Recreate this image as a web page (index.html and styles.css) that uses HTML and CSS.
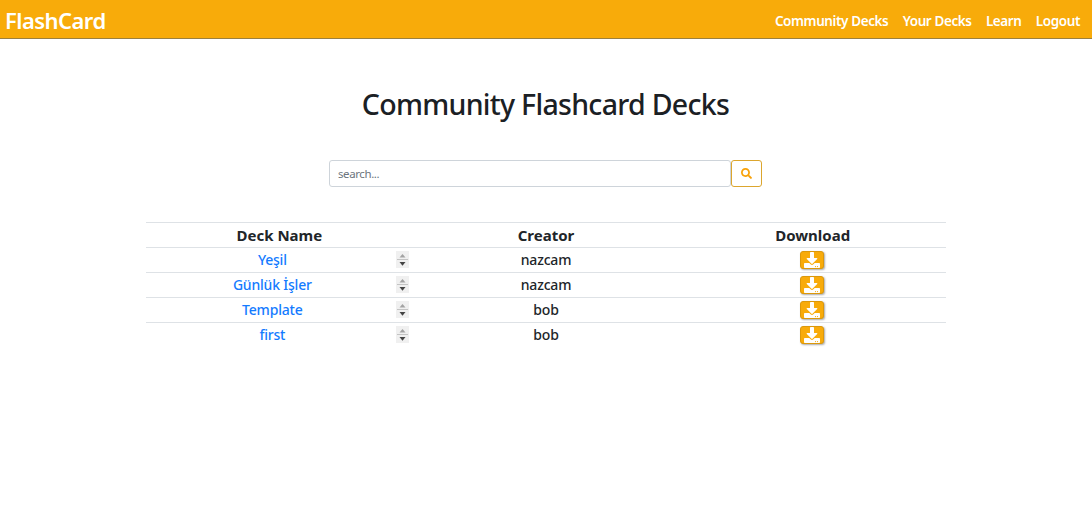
FILE: index.html
```html
<!DOCTYPE html>
<html lang="en">
<head>
<meta charset="utf-8">
<title>FlashCard</title>
<link rel="stylesheet" href="styles.css">
</head>
<body>
<svg class="defs" aria-hidden="true">
  <symbol id="search" viewBox="0 0 512 512"><path d="M505 442.700L405.300 343c-4.500-4.500-10.600-7-17-7H372c27.600-35.300 44-79.700 44-128C416 93.100 322.900 0 208 0S0 93.100 0 208s93.100 208 208 208c48.300 0 92.700-16.400 128-44v16.300c0 6.400 2.500 12.500 7 17l99.700 99.700c9.400 9.400 24.600 9.400 33.900 0l28.300-28.300c9.400-9.400 9.400-24.600.1-34zM208 336c-70.700 0-128-57.200-128-128 0-70.700 57.200-128 128-128 70.700 0 128 57.200 128 128 0 70.700-57.200 128-128 128z"/></symbol>
  <symbol id="download" viewBox="0 0 512 512"><path d="M216 0h80c13.300 0 24 10.700 24 24v168h87.700c17.800 0 26.700 21.500 14.100 34.100L269.700 378.300c-7.500 7.500-19.800 7.500-27.300 0L90.100 226.100c-12.600-12.600-3.700-34.100 14.100-34.100H192V24c0-13.300 10.700-24 24-24zm296 376v112c0 13.300-10.700 24-24 24H24c-13.300 0-24-10.700-24-24V376c0-13.300 10.700-24 24-24h146.700l49 49c20.100 20.100 52.500 20.100 72.600 0l49-49H488c13.300 0 24 10.700 24 24zm-124 88c0-11-9-20-20-20s-20 9-20 20 9 20 20 20 20-9 20-20zm64 0c0-11-9-20-20-20s-20 9-20 20 9 20 20 20 20-9 20-20z"/></symbol>
  <symbol id="spinner" viewBox="0 0 13 17"><path fill="#f0f0f0" d="M0 0h13v17H0z"/><path fill="#a3a3a3" d="M3.500 6.500l3-3.500 3 3.500z"/><path fill="#c4c4c4" d="M1 8h11v1H1z"/><path fill="#444" d="M3.500 11h6l-3 3.800z"/></symbol>
</svg>
<header class="navbar">
  <a class="brand">FlashCard</a>
  <nav class="links">
    <a>Community Decks</a>
    <a>Your Decks</a>
    <a>Learn</a>
    <a>Logout</a>
  </nav>
</header>
<main class="page">
  <h1 class="title">Community Flashcard Decks</h1>
  <form class="search">
    <input class="search-input" type="text" placeholder="search...">
    <button class="search-button" type="button" aria-label="Search"><svg class="search-icon"><use href="#search"/></svg></button>
  </form>
  <div class="decks">
    <div class="row head"><div>Deck Name</div><div>Creator</div><div>Download</div></div>
    <div class="row"><div class="deck"><a class="name">Yeşil</a><svg class="spinner"><use href="#spinner"/></svg></div><div>nazcam</div><div class="action"><button class="download" aria-label="Download"><svg class="download-icon"><use href="#download"/></svg></button></div></div>
    <div class="row"><div class="deck"><a class="name">Günlük İşler</a><svg class="spinner"><use href="#spinner"/></svg></div><div>nazcam</div><div class="action"><button class="download" aria-label="Download"><svg class="download-icon"><use href="#download"/></svg></button></div></div>
    <div class="row"><div class="deck"><a class="name">Template</a><svg class="spinner"><use href="#spinner"/></svg></div><div>bob</div><div class="action"><button class="download" aria-label="Download"><svg class="download-icon"><use href="#download"/></svg></button></div></div>
    <div class="row"><div class="deck"><a class="name">first</a><svg class="spinner"><use href="#spinner"/></svg></div><div>bob</div><div class="action"><button class="download" aria-label="Download"><svg class="download-icon"><use href="#download"/></svg></button></div></div>
  </div>
</main>
</body>
</html>
```
FILE: styles.css
```css
* { box-sizing: border-box; }
body { margin: 0; background: #fff; color: #212529; font-family: "Noto Sans", "Open Sans", sans-serif; }
.defs { display: none; }
.navbar { display: flex; align-items: center; justify-content: space-between; height: 39px; padding: 0 12px 0 5px; background: #f8ab0a; border-bottom: 1px solid #9b803f; color: #fff; }
.brand { font-size: 22px; font-weight: 600; letter-spacing: -0.55px; line-height: 36px; padding-top: 1px; }
.links { display: flex; gap: 14.300px; padding-top: 3px; font-size: 13.500px; font-weight: 600; line-height: 20px; letter-spacing: -0.4px; white-space: nowrap; }
.page { display: flex; flex-direction: column; align-items: center; padding-top: 45px; }
.title { margin: 0 1px 0 0; font-size: 28.500px; font-weight: 500; line-height: 40px; letter-spacing: -0.7px; white-space: nowrap; color: #1b2024; }
.search { display: flex; width: 433px; height: 27px; margin: 36px 1px 0 0; }
.search-input { flex: 1; min-width: 0; padding: 0 8px; border: 1px solid #ced4da; border-radius: 3px; background: #fff; font: 11.500px "Noto Sans", sans-serif; letter-spacing: -0.4px; }
.search-input::placeholder { color: #6c757d; opacity: 1; }
.search-button { display: flex; align-items: center; justify-content: center; width: 31px; padding: 0; border: 1px solid #dca62e; border-radius: 3px; background: #fff; }
.search-icon { width: 11px; height: 11px; fill: #f8a20a; }
.decks { width: 800px; margin-top: 35px; font-size: 14px; font-weight: 500; line-height: 24px; }
.row { display: grid; grid-template-columns: repeat(3, 1fr); height: 25px; border-top: 1px solid #dee2e6; text-align: center; letter-spacing: -0.2px; }
.head { font-size: 15px; font-weight: 700; line-height: 24px; letter-spacing: 0; }
.deck { display: flex; align-items: center; padding-right: 4px; }
.name { flex: 1; padding-left: 3px; color: #147bff; }
.spinner { width: 13px; height: 17px; margin-bottom: 1px; }
.action { display: flex; align-items: center; justify-content: center; padding-right: 2px; }
.download { display: flex; align-items: center; justify-content: center; width: 24px; height: 18px; padding: 0; background: #f8ab0a; border: 1px solid #dc980b; border-radius: 3px; box-shadow: 1px 1px 2px #aaa; }
.download-icon { width: 16px; height: 16px; fill: #fff; }
```
